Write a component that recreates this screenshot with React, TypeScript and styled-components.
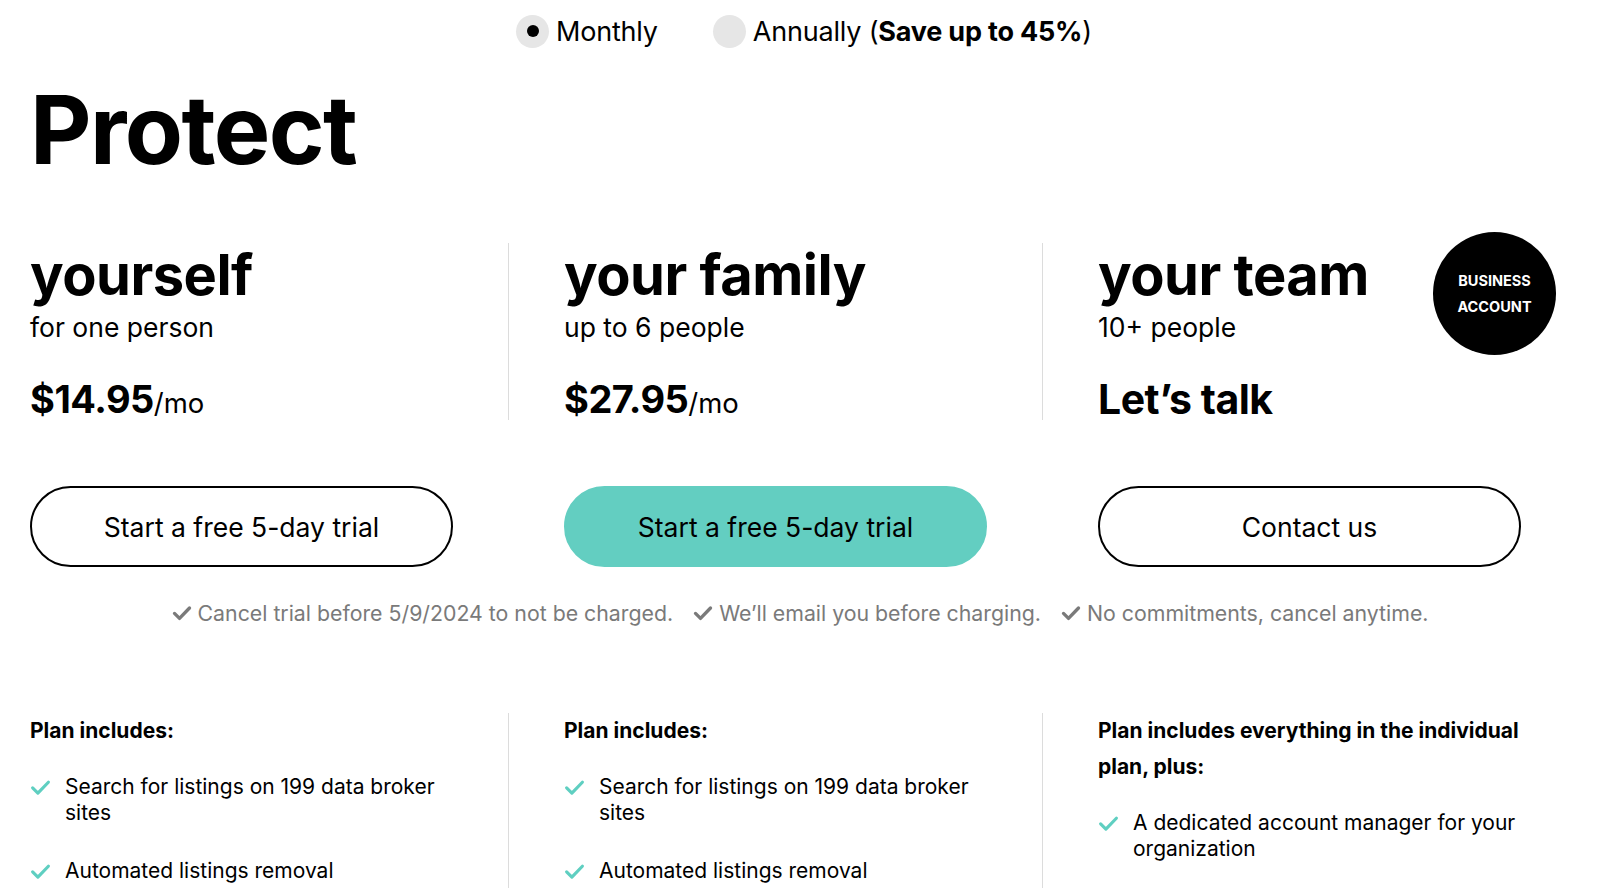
import styled, { createGlobalStyle } from "styled-components";

const GlobalStyle = createGlobalStyle`
  html, body {
    margin: 0;
    padding: 0;
    background: #ffffff;
    color: #000000;
    font-family: Inter, "Noto Sans", "Liberation Sans", sans-serif;
  }
  * { box-sizing: border-box; }
`;

const Page = styled.div`
  width: 1600px;
  height: 888px;
  overflow: hidden;
`;

const BillingToggle = styled.div`
  display: flex;
  justify-content: center;
  align-items: center;
  gap: 55px;
  height: 62px;
  padding-left: 8px;
`;

const RadioOption = styled.label`
  display: flex;
  align-items: center;
  gap: 7px;
  font-size: 27px;
  font-weight: 400;
  letter-spacing: -0.2px;
  strong { font-weight: 700; }
`;

const RadioCircle = styled.span<{ $checked?: boolean }>`
  width: 33px;
  height: 33px;
  border-radius: 50%;
  background: #e6e6e6;
  display: flex;
  align-items: center;
  justify-content: center;
  &::after {
    content: "";
    display: ${({ $checked }) => ($checked ? "block" : "none")};
    width: 12px;
    height: 12px;
    border-radius: 50%;
    background: #000;
  }
`;

const Content = styled.div`
  padding-left: 30px;
`;

const Title = styled.h1`
  margin: 18px 0 0;
  font-size: 95px;
  font-weight: 700;
  letter-spacing: -1.6px;
  line-height: 100px;
`;

const Columns = styled.div<{ $top: number }>`
  display: grid;
  grid-template-columns: 478px 534px 1fr;
  margin-top: ${({ $top }) => $top}px;
`;

const Column = styled.div<{ $first?: boolean }>`
  position: relative;
  padding-left: ${({ $first }) => ($first ? "0" : "56px")};
`;

const Divider = styled.div<{ $height: number }>`
  position: absolute;
  left: 0;
  top: 0;
  width: 1px;
  height: ${({ $height }) => $height}px;
  background: #dcdcdc;
`;

const PlanName = styled.h2`
  margin: 0;
  font-size: 56px;
  font-weight: 700;
  letter-spacing: -0.5px;
  line-height: 64px;
`;

const PlanAudience = styled.div`
  font-size: 26.5px;
  line-height: 30px;
  margin-top: 5px;
`;

const Price = styled.div<{ $size: number }>`
  margin-top: 33px;
  font-size: ${({ $size }) => $size}px;
  font-weight: 700;
  line-height: 48px;
  letter-spacing: -0.5px;
  span {
    font-size: 27.5px;
    font-weight: 400;
    letter-spacing: 0;
  }
`;

const Badge = styled.div`
  position: absolute;
  top: -11px;
  right: 44px;
  width: 123px;
  height: 123px;
  border-radius: 50%;
  background: #000;
  color: #fff;
  display: flex;
  align-items: center;
  justify-content: center;
  text-align: center;
  font-size: 14.5px;
  font-weight: 700;
  line-height: 26px;
`;

const PlanButton = styled.button<{ $filled?: boolean }>`
  width: 423px;
  height: 81px;
  border-radius: 41px;
  border: ${({ $filled }) => ($filled ? "2px solid #63cec1" : "2px solid #000")};
  background: ${({ $filled }) => ($filled ? "#63cec1" : "#fff")};
  color: #000;
  font-family: inherit;
  font-size: 26.5px;
  font-weight: 400;
  cursor: pointer;
`;

const Notes = styled.div`
  display: flex;
  justify-content: center;
  gap: 20px;
  margin-top: 31px;
  padding-right: 30px;
  font-size: 21.3px;
  color: #7a7a7a;
  line-height: 30px;
`;

const Note = styled.span`
  display: flex;
  align-items: center;
  gap: 6px;
`;

const IncludesTitle = styled.div`
  max-width: 450px;
  font-size: 21px;
  font-weight: 700;
  line-height: 36px;
`;

const FeatureList = styled.ul`
  list-style: none;
  margin: 25px 0 0;
  padding: 0;
  display: flex;
  flex-direction: column;
  gap: 32px;
`;

const Feature = styled.li`
  display: flex;
  align-items: flex-start;
  gap: 14px;
  max-width: 430px;
  font-size: 21px;
  line-height: 26px;
  svg { flex-shrink: 0; margin-top: 3px; }
`;

const Check = ({ color, size, weight }: { color: string; size: number; weight: number }) => (
  <svg width={size} height={size} viewBox="0 0 24 24" fill="none">
    <path d="M3 12.5l6 6L21 6" stroke={color} strokeWidth={weight} strokeLinecap="round" strokeLinejoin="round" />
  </svg>
);

const plans = [
  { name: "yourself", who: "for one person", price: "$14.95", cta: "Start a free 5-day trial" },
  { name: "your family", who: "up to 6 people", price: "$27.95", cta: "Start a free 5-day trial", filled: true },
  { name: "your team", who: "10+ people", price: null, cta: "Contact us", badge: true },
];

const includes = [
  { title: "Plan includes:", items: ["Search for listings on 199 data broker sites", "Automated listings removal"] },
  { title: "Plan includes:", items: ["Search for listings on 199 data broker sites", "Automated listings removal"] },
  { title: "Plan includes everything in the individual plan, plus:", items: ["A dedicated account manager for your organization"] },
];

const notes = [
  "Cancel trial before 5/9/2024 to not be charged.",
  "We’ll email you before charging.",
  "No commitments, cancel anytime.",
];

export default function App() {
  return (
    <Page>
      <GlobalStyle />
      <BillingToggle>
        <RadioOption>
          <RadioCircle $checked />
          Monthly
        </RadioOption>
        <RadioOption>
          <RadioCircle />
          <span>
            Annually (<strong>Save up to 45%</strong>)
          </span>
        </RadioOption>
      </BillingToggle>

      <Content>
        <Title>Protect</Title>

        {/* Plan headers */}
        <Columns $top={63}>
          {plans.map((p, i) => (
            <Column key={p.name} $first={i === 0}>
              {i > 0 && <Divider $height={177} />}
              <PlanName>{p.name}</PlanName>
              <PlanAudience>{p.who}</PlanAudience>
              {p.price ? (
                <Price $size={38}>
                  {p.price}
                  <span>/mo</span>
                </Price>
              ) : (
                <Price $size={41}>Let’s talk</Price>
              )}
              {p.badge && (
                <Badge>
                  BUSINESS
                  <br />
                  ACCOUNT
                </Badge>
              )}
            </Column>
          ))}
        </Columns>

        <Columns $top={59}>
          {plans.map((p, i) => (
            <Column key={p.name} $first={i === 0}>
              <PlanButton $filled={p.filled}>{p.cta}</PlanButton>
            </Column>
          ))}
        </Columns>

        <Notes>
          {notes.map((n) => (
            <Note key={n}>
              <Check color="#7a7a7a" size={20} weight={4} />
              {n}
            </Note>
          ))}
        </Notes>

        {/* Plan features */}
        <Columns $top={85}>
          {includes.map((c, i) => (
            <Column key={i} $first={i === 0}>
              {i > 0 && <Divider $height={200} />}
              <IncludesTitle>{c.title}</IncludesTitle>
              <FeatureList>
                {c.items.map((it) => (
                  <Feature key={it}>
                    <Check color="#5fcfc1" size={21} weight={3.6} />
                    {it}
                  </Feature>
                ))}
              </FeatureList>
            </Column>
          ))}
        </Columns>
      </Content>
    </Page>
  );
}
